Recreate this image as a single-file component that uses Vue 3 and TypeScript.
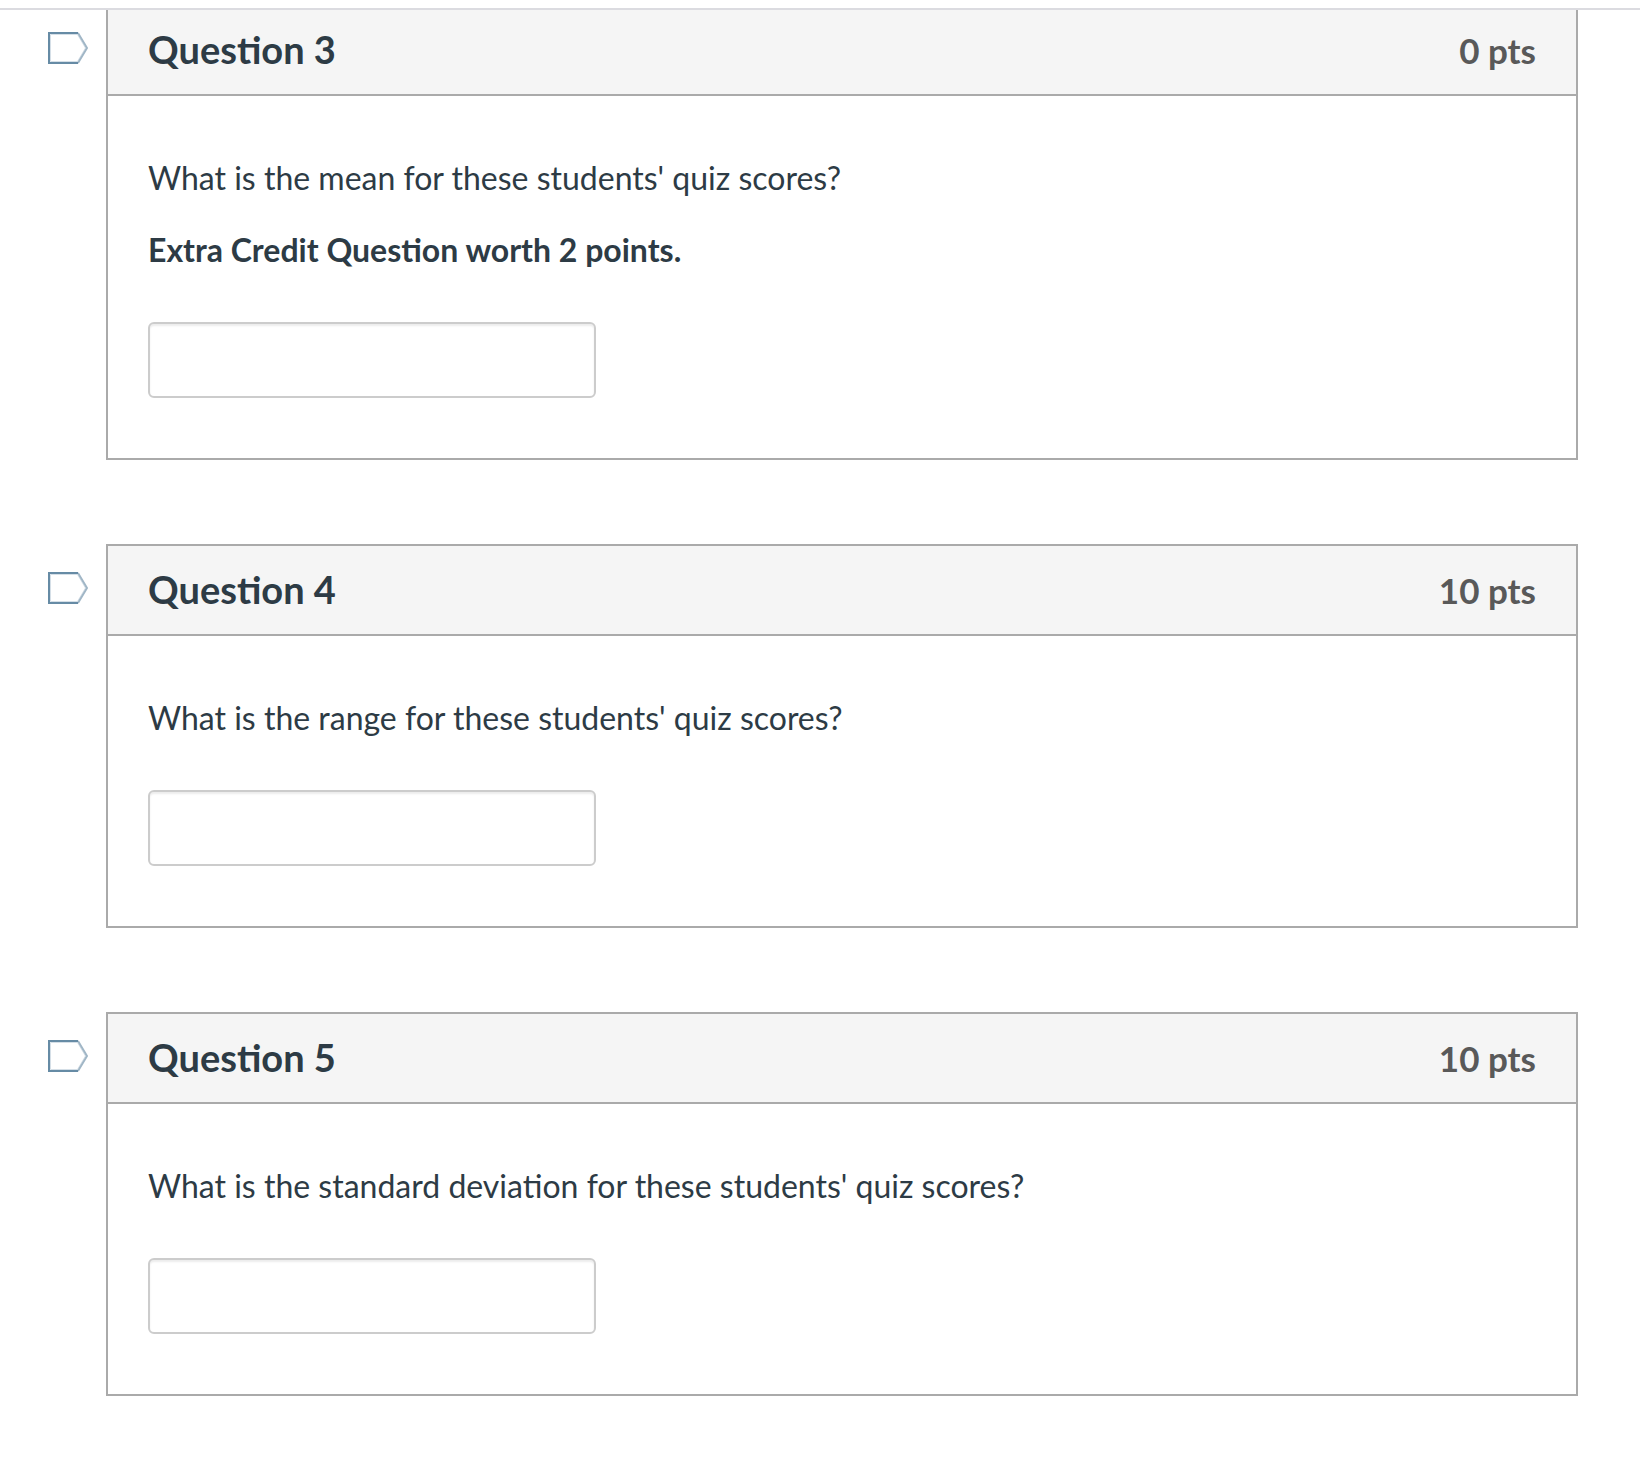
<script setup lang="ts">
import { ref } from 'vue'

interface Question {
  id: number
  points: number
  prompt: string
  note?: string
}

const questions: Question[] = [
  {
    id: 3,
    points: 0,
    prompt: "What is the mean for these students' quiz scores?",
    note: 'Extra Credit Question worth 2 points.',
  },
  { id: 4, points: 10, prompt: "What is the range for these students' quiz scores?" },
  { id: 5, points: 10, prompt: "What is the standard deviation for these students' quiz scores?" },
]

const answers = ref<Record<number, string>>({ 3: '', 4: '', 5: '' })
const flagged = ref<Record<number, boolean>>({})

function toggleFlag(id: number): void {
  flagged.value[id] = !flagged.value[id]
}
</script>

<template>
  <div class="page">
    <header class="topbar"></header>
    <main class="questions">
      <section v-for="q in questions" :key="q.id" class="row">
        <button
          type="button"
          class="flag"
          :aria-label="`Flag question ${q.id}`"
          :aria-pressed="!!flagged[q.id]"
          @click="toggleFlag(q.id)"
        >
          <svg viewBox="0 0 40 32" width="40" height="32" fill="none" aria-hidden="true">
            <path d="M2.5 2.5H29.5L37.5 16L29.5 29.5H2.5Z" stroke="#d5dfe7" stroke-width="1" />
            <path d="M30 1L39 16L30 31" stroke="#a0b6c6" stroke-width="2" />
            <path d="M30 1H1V31H30" stroke="#668ba5" stroke-width="2" />
          </svg>
        </button>
        <article class="card">
          <div class="card-head">
            <h2 class="title">Question {{ q.id }}</h2>
            <span class="points">{{ q.points }} pts</span>
          </div>
          <div class="card-body">
            <label class="prompt" :for="`answer-${q.id}`">{{ q.prompt }}</label>
            <p v-if="q.note" class="prompt note">{{ q.note }}</p>
            <input :id="`answer-${q.id}`" v-model="answers[q.id]" class="answer" type="text" autocomplete="off" />
          </div>
        </article>
      </section>
    </main>
  </div>
</template>

<style>
body {
  background: #fff;
}
</style>

<style scoped>
.page {
  font-family: Lato, 'Open Sans', sans-serif;
  color: #2d3b45;
  overflow: hidden;
}

.topbar {
  position: relative;
  z-index: 1;
  box-sizing: border-box;
  height: 10px;
  background: #fff;
  border-bottom: 2px solid #dbdbe0;
}

.questions {
  display: flex;
  flex-direction: column;
  gap: 84px;
  margin-top: -6px;
  padding: 0 62px 82px 48px;
}

.row {
  display: flex;
  align-items: flex-start;
  gap: 18px;
}

.flag {
  flex: none;
  display: block;
  margin: 28px 0 0;
  padding: 0;
  border: 0;
  background: none;
  cursor: pointer;
}

.flag svg {
  display: block;
}

.card {
  flex: 1;
  min-width: 0;
  border: 2px solid #aaa;
}

.card-head {
  display: flex;
  align-items: baseline;
  justify-content: space-between;
  box-sizing: border-box;
  min-height: 90px;
  padding: 20px 40px;
  background: #f5f5f5;
  border-bottom: 2px solid #aaa;
}

.title {
  margin: 0;
  font-size: 38px;
  line-height: 46px;
  font-weight: 700;
}

.points {
  font-size: 35px;
  line-height: 46px;
  font-weight: 700;
  color: #595959;
}

.card-body {
  display: flex;
  flex-direction: column;
  align-items: flex-start;
  padding: 58px 40px 60px;
}

.prompt {
  margin: 0 0 24px;
  font-size: 32px;
  line-height: 48px;
}

.note {
  font-weight: 700;
}

.answer {
  box-sizing: border-box;
  width: 448px;
  max-width: 100%;
  height: 76px;
  margin: 24px 0 0;
  padding: 8px 16px;
  border: 2px solid #ccc;
  border-radius: 6px;
  background: #fff;
  box-shadow: inset 0 2px 2px rgba(0, 0, 0, 0.08);
  color: inherit;
  font: inherit;
  font-size: 32px;
}
</style>
